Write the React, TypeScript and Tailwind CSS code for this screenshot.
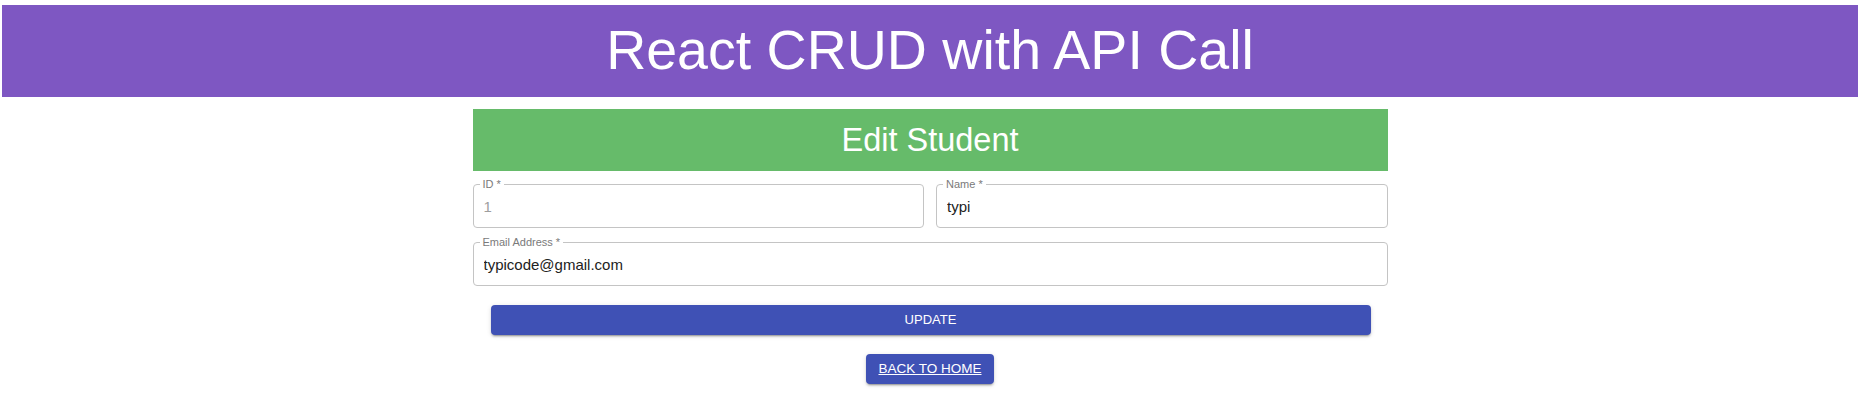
import React from 'react'

const font = { fontFamily: '"Liberation Sans", Arial, sans-serif' }

function OutlinedField({ label, value, disabled }: { label: string; value: string; disabled?: boolean }) {
  return (
    <div className="relative h-[44px] rounded-[4px] border border-[#c4c4c4] bg-white">
      <span className="absolute left-[6px] top-[-8px] bg-white px-[3px] text-[11px] leading-[14px] text-[#7a7a7a]">
        {label}
      </span>
      <input
        readOnly
        value={value}
        className={
          'h-full w-full bg-transparent px-[10px] text-[15px] outline-none ' +
          (disabled ? 'text-[#9e9e9e]' : 'text-[#222]')
        }
        style={font}
      />
    </div>
  )
}

export default function App() {
  return (
    <div className="min-h-screen bg-white pl-[2px] pr-[6px] pt-[5px]" style={font}>
      {/* Page header */}
      <header className="flex h-[92px] items-center justify-center bg-[#7e57c2]">
        <h1 className="text-[55.5px] font-normal leading-none text-white">React CRUD with API Call</h1>
      </header>

      <div className="mx-auto mt-[12px] w-[915px]">
        <div className="flex h-[62px] items-center justify-center bg-[#66bb6a]">
          <h2 className="text-[32.5px] font-normal leading-none text-white">Edit Student</h2>
        </div>

        <form className="mt-[13px] flex flex-col gap-[14px]" onSubmit={e => e.preventDefault()}>
          <div className="grid grid-cols-2 gap-[12px]">
            <OutlinedField label="ID *" value="1" disabled />
            <OutlinedField label="Name *" value="typi" />
          </div>
          <OutlinedField label="Email Address *" value="typicode@gmail.com" />

          <div className="ml-[18px] mr-[17px] mt-[5px]">
            <button
              type="submit"
              className="h-[30px] w-full rounded-[4px] bg-[#3f51b5] text-[13px] uppercase text-white shadow-[0_3px_1px_-2px_rgba(0,0,0,0.2),0_2px_2px_0_rgba(0,0,0,0.14),0_1px_5px_0_rgba(0,0,0,0.12)]"
              style={font}
            >
              Update
            </button>
          </div>
        </form>

        <div className="mt-[19px] flex justify-center">
          <a
            href="#"
            className="flex h-[30px] w-[128px] items-center justify-center rounded-[4px] bg-[#3f51b5] text-[13.5px] text-white underline shadow-[0_3px_1px_-2px_rgba(0,0,0,0.2),0_2px_2px_0_rgba(0,0,0,0.14),0_1px_5px_0_rgba(0,0,0,0.12)]"
          >
            BACK TO HOME
          </a>
        </div>
      </div>
    </div>
  )
}
